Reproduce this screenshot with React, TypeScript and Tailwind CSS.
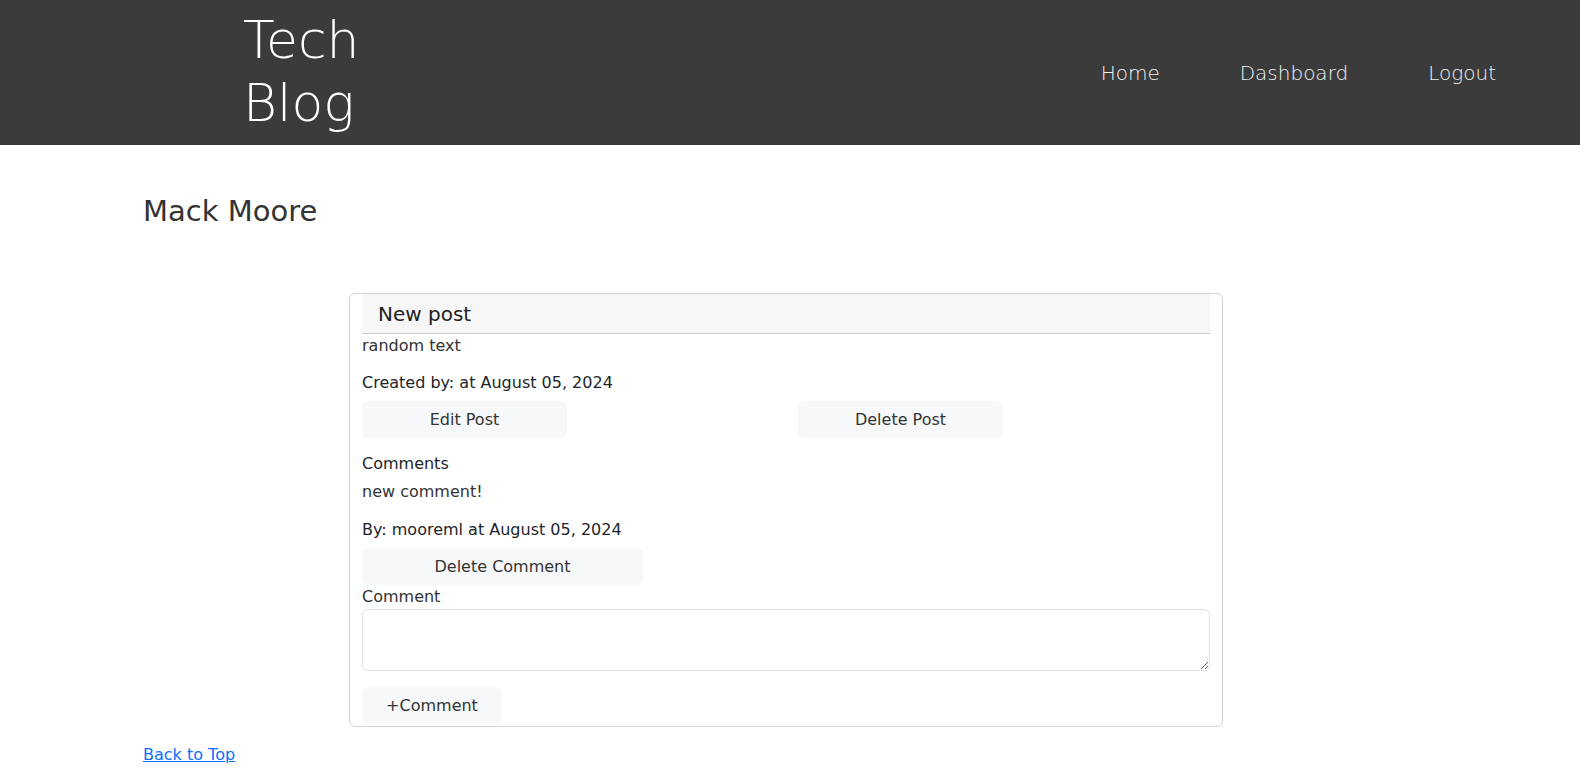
export default function App() {
  return (
    <div className="h-[782px] overflow-hidden bg-white text-[#212529]" style={{ fontFamily: '"DejaVu Sans", "Open Sans", sans-serif' }}>
      {/* Header */}
      <header className="h-[145px] bg-[#3b3b3b] flex items-center justify-between pl-[243px] pr-[84px]">
        <h1 className="text-white text-[52px] leading-[63px] font-extralight -mt-[2px]" style={{ fontFamily: '"DejaVu Sans ExtraLight", "DejaVu Sans", sans-serif' }}>
          Tech
          <br />
          Blog
        </h1>
        <nav className="flex items-center gap-[80px] text-[20px] font-extralight text-[#f2f2f2]" style={{ fontFamily: '"DejaVu Sans ExtraLight", "DejaVu Sans", sans-serif' }}>
          <a>Home</a>
          <a>Dashboard</a>
          <a>Logout</a>
        </nav>
      </header>

      <main className="px-[143px]">
        <h2 className="pt-[48px] text-[29px] leading-[36px] text-[#333]">Mack Moore</h2>

        <div className="mt-[64px] ml-[206px] w-[874px] border border-[#d4d4d4] rounded-[6px] px-3 pb-[1px]">
          <div className="h-[40px] bg-[#f7f7f7] border-b border-[#cfcfcf] flex items-center pl-4 text-[20px] text-[#222]">
            New post
          </div>
          <p className="text-[16px] leading-[24px] text-[#333]">random text</p>
          <p className="mt-[13px] text-[16px] leading-[24px] text-[#212529]">Created by: at August 05, 2024</p>
          <div className="grid grid-cols-2 gap-6 mt-[6px]">
            <div>
              <button className="w-[205px] h-[37px] bg-[#f7f8fa] rounded-[6px] text-[16px] text-[#333]">Edit Post</button>
            </div>
            <div>
              <button className="w-[205px] h-[37px] bg-[#f7f8fa] rounded-[6px] text-[16px] text-[#333]">Delete Post</button>
            </div>
          </div>
          <h3 className="mt-[14px] text-[16px] leading-[24px] text-[#212529]">Comments</h3>
          <p className="mt-[4px] text-[16px] leading-[24px] text-[#333]">new comment!</p>
          <p className="mt-[14px] text-[16px] leading-[24px] text-[#212529]">By: mooreml at August 05, 2024</p>
          <button className="mt-[6px] w-[281px] h-[37px] bg-[#f7f8fa] rounded-[6px] text-[16px] text-[#333]">Delete Comment</button>
          <label className="block text-[16px] leading-[24px] text-[#333]">Comment</label>
          <textarea className="block w-full h-[62px] border border-[#dee2e6] rounded-[6px] outline-none" />
          <button className="mt-[16px] mb-[1px] w-[140px] h-[37px] bg-[#f7f8fa] rounded-[6px] text-[16px] text-[#333]">+Comment</button>
        </div>

        <a href="#" className="inline-block mt-[16px] text-[16px] leading-[24px] text-[#0d6efd] underline">Back to Top</a>
      </main>
    </div>
  );
}
